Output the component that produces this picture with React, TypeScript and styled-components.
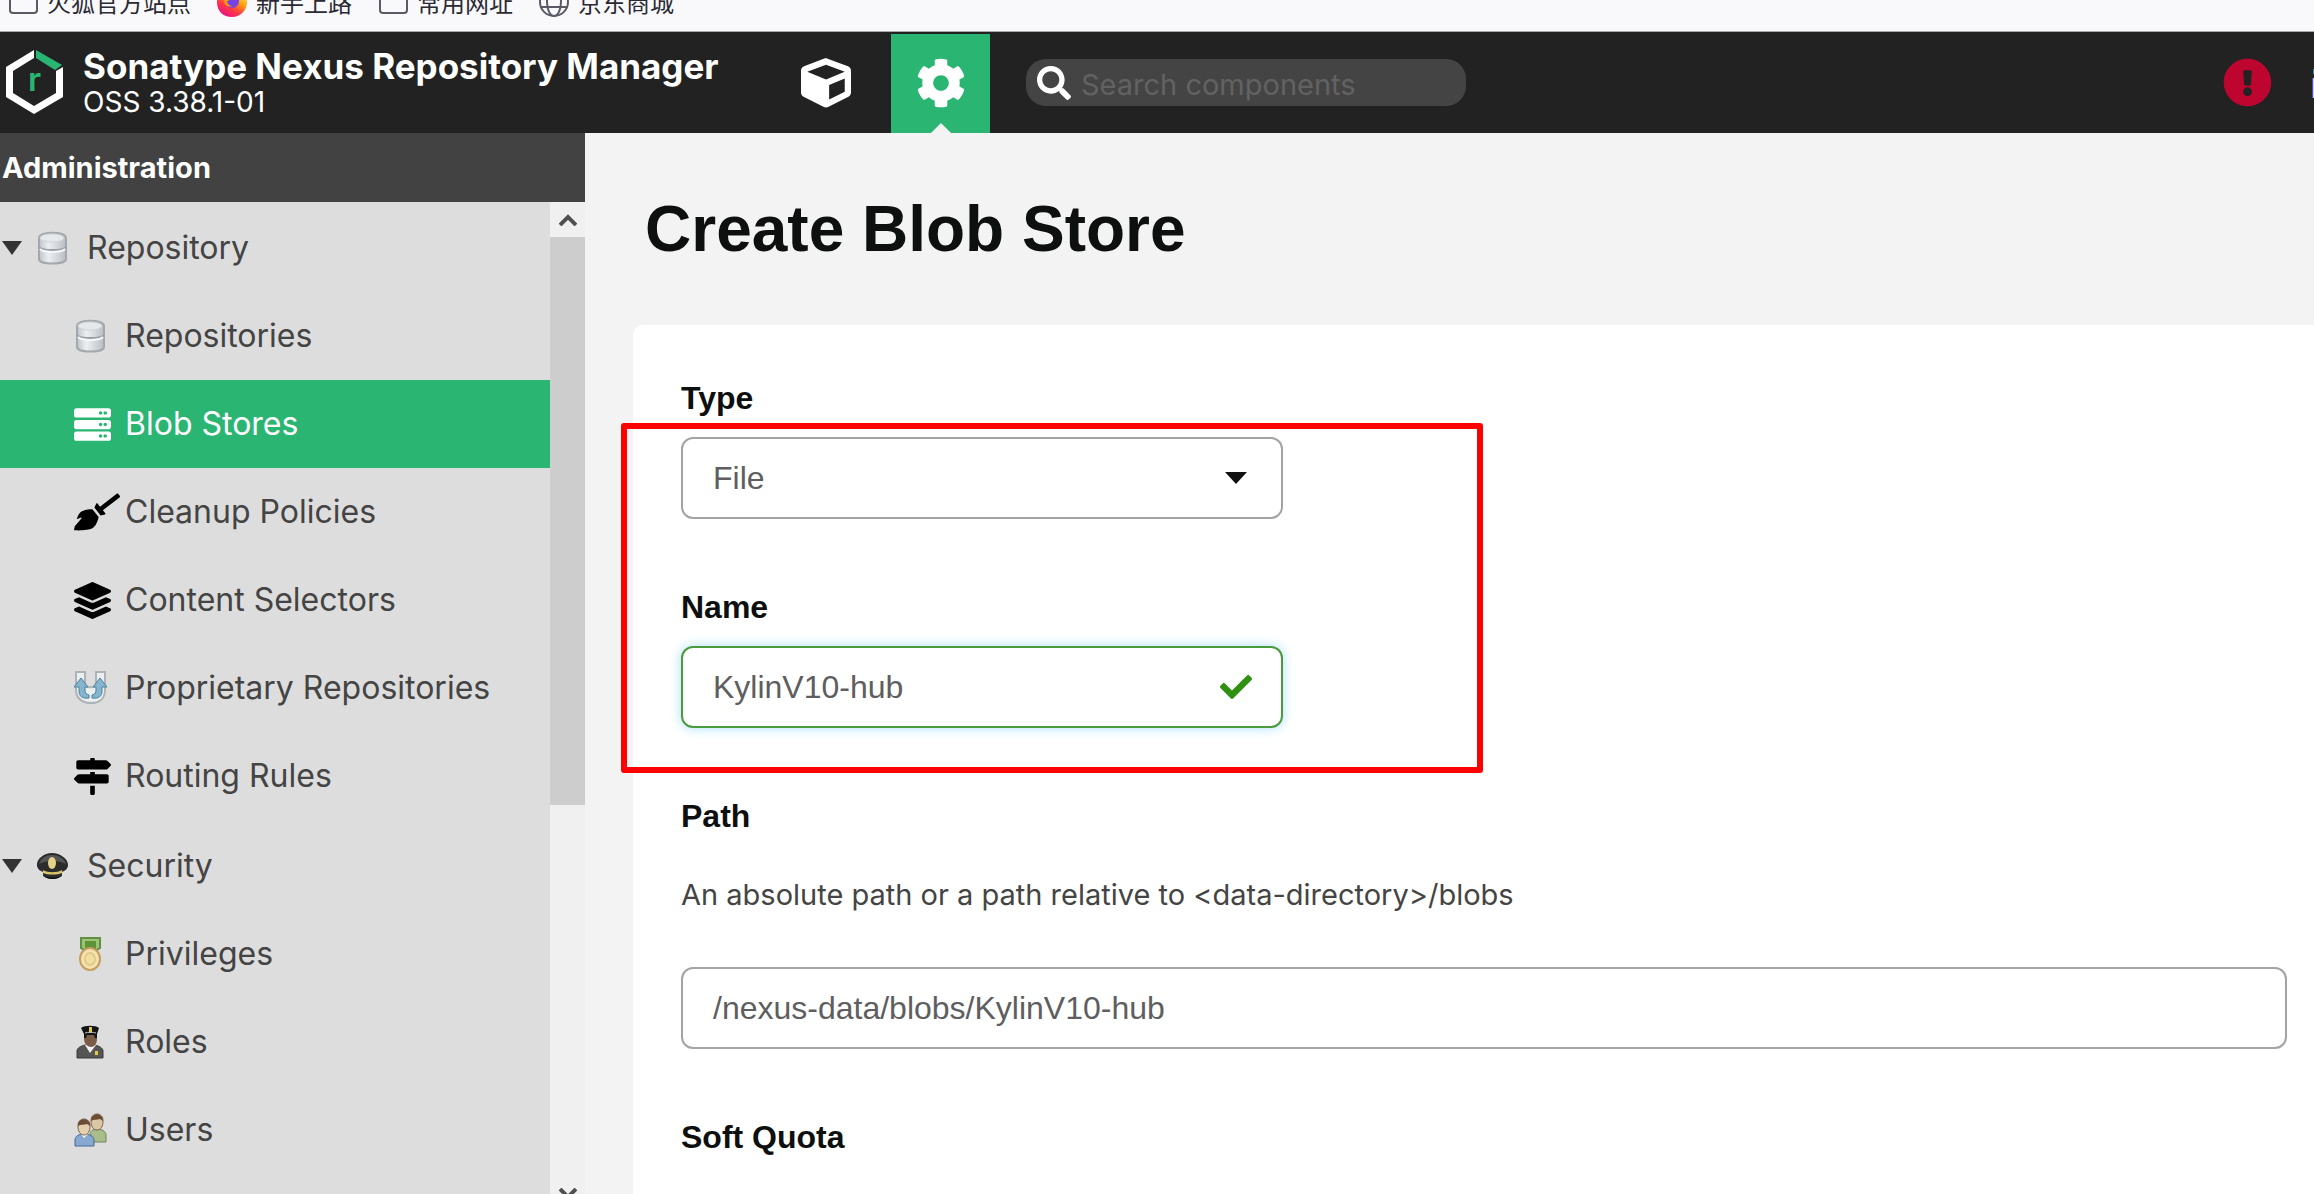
import React from 'react';
import styled, { createGlobalStyle, css } from 'styled-components';
import {
  FaBroom,
  FaCheck,
  FaCog,
  FaCube,
  FaExclamationCircle,
  FaLayerGroup,
  FaMapSigns,
  FaSearch,
  FaServer,
} from 'react-icons/fa';

const sans = '"Liberation Sans", Arial, sans-serif';
const brand = 'Inter, "Liberation Sans", sans-serif';
const green = '#2ab573';

const GlobalStyle = createGlobalStyle`
  *, *::before, *::after { box-sizing: border-box; }
  body { margin: 0; font-family: ${brand}; background: #f3f3f3; }
  button, input, select { font: inherit; margin: 0; }
  svg { display: block; flex: none; }
`;

/* ---------- shell ---------- */

const Page = styled.div`
  display: flex;
  flex-direction: column;
  height: 100vh;
  overflow: hidden;
`;

const Bookmarks = styled.nav`
  display: flex;
  align-items: flex-end;
  gap: 25px;
  flex: none;
  height: 32px;
  padding: 0 7px 13px;
  overflow: hidden;
  background: #f9f9fb;
  border-bottom: 1px solid #a9a9a9;
`;

const Bookmark = styled.a`
  display: flex;
  align-items: center;
  gap: 8px;
  flex: none;
  height: 32px;
  color: #2b2a33;
  font: 24px/32px "Noto Sans CJK SC", sans-serif;
  text-decoration: none;
  white-space: nowrap;
`;

const Header = styled.header`
  display: flex;
  align-items: stretch;
  flex: none;
  height: 101px;
  padding-top: 2px;
  background: #222;
  color: #fff;
`;

const Brand = styled.div`
  display: flex;
  align-items: center;
  gap: 19px;
  flex: 0 0 776px;
  padding: 0 0 4px 6px;
`;

const Product = styled.h1`
  margin: 0;
  font-size: 35px;
  font-weight: 700;
  line-height: 40px;
  white-space: nowrap;
`;

const Version = styled.div`
  font-size: 28px;
  line-height: 32px;
`;

const ModeButton = styled.button<{ $active?: boolean }>`
  display: flex;
  align-items: center;
  justify-content: center;
  position: relative;
  width: 99px;
  padding: 0 0 2px;
  border: 0;
  background: ${(p) => (p.$active ? green : 'transparent')};
  color: #fff;
  ${(p) =>
    p.$active &&
    css`
      margin-left: 16px;
      &::after {
        content: '';
        position: absolute;
        bottom: 0;
        border: 10px solid transparent;
        border-top: 0;
        border-bottom-color: #f3f3f3;
      }
    `}
`;

const Search = styled.label`
  display: flex;
  align-items: center;
  align-self: center;
  gap: 10px;
  width: 440px;
  height: 47px;
  margin: 0 0 2px 36px;
  padding: 0 11px;
  border-radius: 20px;
  background: #444;
`;

const SearchInput = styled.input`
  flex: 1;
  min-width: 0;
  padding: 4px 0 0;
  border: 0;
  outline: 0;
  background: transparent;
  color: #fff;
  font-size: 29px;
  &::placeholder {
    color: #626262;
    opacity: 1;
  }
`;

const HeaderEnd = styled.div`
  display: flex;
  align-items: center;
  gap: 40px;
  margin-left: auto;
  padding-bottom: 2px;
  color: #be0530;
`;

const Body = styled.div`
  display: flex;
  flex: 1;
  min-height: 0;
`;

/* ---------- sidebar ---------- */

const Sidebar = styled.aside`
  display: flex;
  flex-direction: column;
  flex: 0 0 585px;
  background: #ddd;
`;

const SidebarTitle = styled.h2`
  flex: none;
  margin: 0;
  padding: 1px 2px 0;
  background: #424242;
  color: #fff;
  font-size: 29px;
  font-weight: 700;
  line-height: 68px;
`;

const SidebarBody = styled.div`
  display: flex;
  flex: 1;
  min-height: 0;
`;

const Tree = styled.nav`
  flex: 1;
  overflow: hidden;
`;

const Group = styled.div`
  padding-top: 2px;
`;

const rowStyle = css`
  display: flex;
  align-items: center;
  width: 100%;
  height: 88px;
  border: 0;
  color: #444;
  font-size: 32px;
  line-height: 40px;
  text-align: left;
  text-decoration: none;
  white-space: nowrap;
`;

const GroupRow = styled.button`
  ${rowStyle}
  padding: 0 0 0 2px;
  background: transparent;
`;

const ItemRow = styled.a<{ $selected?: boolean }>`
  ${rowStyle}
  padding-left: 74px;
  background: ${(p) => (p.$selected ? green : 'transparent')};
  color: ${(p) => (p.$selected ? '#fff' : '#444')};
`;

const Arrow = styled.span`
  width: 20px;
  margin-right: 14px;
  border: 10px solid transparent;
  border-top: 14px solid #333;
  border-bottom: 0;
`;

const IconCell = styled.span<{ $selected?: boolean }>`
  display: flex;
  flex: 0 0 51px;
  color: ${(p) => (p.$selected ? '#fff' : '#000')};
`;

const Scrollbar = styled.div`
  display: flex;
  flex-direction: column;
  justify-content: space-between;
  flex: 0 0 35px;
  background: #f0f0f0;
`;

const Thumb = styled.div`
  height: 568px;
  margin-bottom: auto;
  background: #cdcdcd;
`;

const ScrollButton = styled.button<{ $end?: boolean }>`
  display: flex;
  align-items: ${(p) => (p.$end ? 'flex-start' : 'center')};
  justify-content: center;
  height: ${(p) => (p.$end ? 26 : 35)}px;
  padding: ${(p) => (p.$end ? 20 : 0)}px 0 0;
  border: 0;
  overflow: hidden;
  background: #f0f0f0;
`;

/* ---------- content ---------- */

const Main = styled.main`
  flex: 1;
  min-width: 0;
  padding: 60px 0 0 48px;
  overflow: hidden;
  display: flex;
  flex-direction: column;
  gap: 60px;
`;

const PageTitle = styled.h2`
  margin: 0;
  padding-left: 12px;
  color: #0e1010;
  font: 700 64px/72px ${sans};
`;

const Card = styled.form`
  display: flex;
  flex-direction: column;
  gap: 68px;
  flex: 1;
  padding: 53px 27px 0 48px;
  border-top-left-radius: 10px;
  background: #fff;
`;

const Highlighted = styled.div`
  display: flex;
  flex-direction: column;
  gap: 68px;
  position: relative;
  &::after {
    content: '';
    position: absolute;
    top: 45px;
    bottom: -45px;
    left: -60px;
    width: 862px;
    border: 6px solid #f00;
    border-radius: 3px;
    pointer-events: none;
  }
`;

const Field = styled.div`
  display: flex;
  flex-direction: column;
  gap: 19px;
`;

const labelStyle = css`
  color: #0e1010;
  font: 700 32px/40px ${sans};
`;

const Label = styled.label`
  ${labelStyle}
`;

const SectionLabel = styled.h3`
  ${labelStyle}
  margin: 0;
`;

const Hint = styled.p`
  margin: 0;
  padding: 20px 0 33px;
  color: #444;
  font-size: 29px;
  line-height: 40px;
`;

const ControlBox = styled.div<{ $short?: boolean; $valid?: boolean }>`
  display: grid;
  grid-template-columns: 1fr auto;
  align-items: center;
  height: 82px;
  width: 100%;
  max-width: ${(p) => (p.$short ? '602px' : 'none')};
  border: 2px solid ${(p) => (p.$valid ? '#4a9b3c' : '#a3a3a3')};
  border-radius: 12px;
  background: #fff;
  box-shadow: ${(p) => (p.$valid ? '0 0 12px #a9dff8' : 'none')};
`;

const controlStyle = css`
  grid-area: 1 / 1 / 2 / 3;
  width: 100%;
  height: 100%;
  padding: 0 80px 0 30px;
  border: 0;
  outline: 0;
  border-radius: 12px;
  background: transparent;
  color: #5e5e60;
  font: 32px/40px ${sans};
`;

const TextInput = styled.input`
  ${controlStyle}
`;

const Select = styled.select`
  ${controlStyle}
  appearance: none;
`;

const Adornment = styled.span`
  grid-area: 1 / 2 / 2 / 3;
  display: flex;
  justify-content: center;
  width: 91px;
  color: #2f910f;
  pointer-events: none;
`;

const Caret = styled.span`
  border: 11px solid transparent;
  border-top: 12px solid #111;
  border-bottom: 0;
`;

/* ---------- drawings ---------- */

const FolderIcon = () => (
  <svg width="32" height="32" viewBox="0 0 32 32" fill="none" stroke="#5b5b66" strokeWidth="2">
    <path d="M3 7a3 3 0 0 1 3-3h7l4 4h10a3 3 0 0 1 3 3v13a3 3 0 0 1-3 3H6a3 3 0 0 1-3-3z" />
  </svg>
);

const GlobeIcon = () => (
  <svg width="32" height="32" viewBox="0 0 32 32" fill="none" stroke="#5b5b66" strokeWidth="2">
    <circle cx="16" cy="16" r="14" />
    <ellipse cx="16" cy="16" rx="7" ry="14" />
    <path d="M2 12h28M2 21h28" />
  </svg>
);

const FirefoxIcon = () => (
  <svg width="32" height="32" viewBox="0 0 32 32">
    <defs>
      <linearGradient id="fox" x1="0.85" y1="0.1" x2="0.3" y2="1">
        <stop offset="0" stopColor="#fff44f" />
        <stop offset="0.4" stopColor="#ff980e" />
        <stop offset="0.7" stopColor="#ff3647" />
        <stop offset="1" stopColor="#e31587" />
      </linearGradient>
    </defs>
    <path d="M16 2c9 0 15 6 15 14s-6 15-15 15S1 25 1 16C1 11 3 8 5 6l2 3c2-2 5-2 7-5z" fill="url(#fox)" />
    <circle cx="16" cy="15" r="7" fill="#7542e5" />
    <path d="M8 11c4-2 7 0 9 2-3 0-4 2-6 2 0 3 3 5 6 5-5 2-10-1-9-9z" fill="#ff980e" />
  </svg>
);

const NexusLogo = () => (
  <svg width="58" height="64" viewBox="0 0 58 64">
    <path d="M28 0 0 17v30l28 17 29-17V17l-7 4v22L28 56 7 43V21L28 8z" fill="#fff" />
    <path d="M30 0l26 15-7 5L30 8z" fill={green} />
    <text x="22" y="41" fontFamily="Inter, sans-serif" fontWeight="600" fontSize="33" fill={green}>
      r
    </text>
  </svg>
);

const UserEdge = () => (
  <svg width="2" height="34" viewBox="0 0 2 34">
    <path d="M1 3h1v5H1z" fill="#3f8fb0" />
    <path d="M0 12h1v20H0z" fill="#4c4cc4" />
    <path d="M1 12h1v20H1z" fill="#c9cdf8" />
  </svg>
);

const Chevron = ({ down }: { down?: boolean }) => (
  <svg width="18" height="13" viewBox="0 0 18 13" fill="none" stroke="#505050" strokeWidth="4">
    <path d={down ? 'M1 1l8 8 8-8' : 'M1 12l8-8 8 8'} />
  </svg>
);

const DatabaseIcon = () => (
  <svg width="33" height="34" viewBox="0 0 33 34">
    <defs>
      <linearGradient id="drum">
        <stop offset="0" stopColor="#bfc4c8" />
        <stop offset="0.35" stopColor="#eceff2" />
        <stop offset="1" stopColor="#b9bec2" />
      </linearGradient>
    </defs>
    <path d="M3 7c0-7 27-7 27 0v21c0 6-27 6-27 0z" fill="url(#drum)" stroke="#a3a8ac" strokeWidth="2" />
    <ellipse cx="16" cy="7" rx="12" ry="4" fill="#e6e9ec" stroke="#cfd3d6" />
    <path d="M3 16c3 4 24 4 27 0" fill="none" stroke="#989ea3" strokeWidth="2" />
    <path d="M4 18c4 4 21 4 25 0" fill="none" stroke="#f5f7f8" strokeWidth="2" />
  </svg>
);

const ProprietaryIcon = () => (
  <svg width="33" height="34" viewBox="0 0 33 34">
    <path
      d="M2 1h9v13c0 3 11 3 11 0V1h9v18c0 9-6 13-14 13S2 28 2 19z"
      fill="#eceff1"
      stroke="#adb3b7"
      strokeWidth="2"
    />
    <path d="M7 7l7 9h-3v3c0 3 1 4 4 5v3C8 28 5 25 5 20v-4H0z" fill="#85b4cf" stroke="#4f8299" />
    <path d="M26 7l-7 9h3v3c0 3-1 4-4 5v3c7 1 10-2 10-7v-4h5z" fill="#85b4cf" stroke="#4f8299" />
  </svg>
);

const CapIcon = () => (
  <svg width="33" height="28" viewBox="0 0 33 28">
    <path d="M1 14C0 7 8 1 16 1s17 6 16 13c-1 4-4 5-6 6v4c-5 4-14 4-19 0v-4c-2-1-5-2-6-6z" fill="#2c2c2c" />
    <path d="M3 12C5 6 10 3 16 3s12 3 14 9c-7-4-20-4-27 0z" fill="#555" />
    <path d="M7 18c5 3 14 3 19 0v3c-5 2-14 2-19 0z" fill="#d9c36b" />
    <path d="M8 24c5 2 12 2 17 0-4 4-13 4-17 0z" fill="#0c0c0c" />
    <ellipse cx="16" cy="11" rx="4" ry="6" fill="#e6d488" />
  </svg>
);

const MedalIcon = () => (
  <svg width="33" height="34" viewBox="0 0 33 34">
    <path d="M7 1h19v10l-5 3h-9l-5-3z" fill="#9cc476" stroke="#5f8f3f" strokeWidth="2" />
    <path d="M11 4h11v8H11z" fill="#5f9338" />
    <ellipse cx="16" cy="22" rx="10" ry="11" fill="#f4e3b0" stroke="#c79d60" strokeWidth="2" />
    <ellipse cx="16" cy="22" rx="5" ry="6" fill="#f1dfa2" stroke="#e2ca8a" strokeWidth="2" />
  </svg>
);

const RoleIcon = () => (
  <svg width="33" height="34" viewBox="0 0 33 34">
    <path d="M3 33v-7c0-3 4-5 8-6h10c4 1 8 3 8 6v7z" fill="#555" stroke="#3a3a3a" />
    <path d="M11 20l5 8 6-8-6-2z" fill="#f2f2f2" />
    <path d="M10 8h13v6c0 5-3 8-6 8s-7-3-7-8z" fill="#7a5b45" />
    <path d="M7 3c3-3 15-3 18 0l-2 6v4h-2l-1-3h-7l-1 3h-2V9z" fill="#141414" />
    <path d="M15 2h3v6h-3zM21 26h3v4h-3z" fill="#e2c94a" />
    <path d="M11 8c3-1 8-1 11 0" stroke="#b9b9b9" fill="none" />
  </svg>
);

const UsersIcon = () => (
  <svg width="33" height="34" viewBox="0 0 33 34">
    <path d="M16 29v-7c0-4 3-6 7-6s9 2 9 6v7z" fill="#a9bd8b" stroke="#71855a" />
    <path d="M17 8c0-4 2-7 6-7s6 3 6 7c0 5-2 9-6 9s-6-4-6-9z" fill="#dcc6a6" stroke="#7c6146" />
    <path d="M17 8c0-9 12-9 12 0l-3-2c-3 1-6 0-9 2z" fill="#6c4d36" />
    <path d="M1 33v-6c0-4 4-6 9-6s10 2 10 6v6z" fill="#87a9d1" stroke="#47698f" />
    <path d="M7 21l3 4 4-4z" fill="#fff" />
    <path d="M4 13c0-4 2-7 6-7s6 3 6 7c0 5-2 9-6 9s-6-4-6-9z" fill="#e4cfae" stroke="#7c6146" />
    <path d="M4 13c-1-9 13-9 12 0l-3-2c-3 1-6 0-9 2z" fill="#6c4d36" />
  </svg>
);

/* ---------- data ---------- */

interface Item {
  name: string;
  icon: React.ReactNode;
  selected?: boolean;
}

const bookmarks: Item[] = [
  { name: '火狐官方站点', icon: <FolderIcon /> },
  { name: '新手上路', icon: <FirefoxIcon /> },
  { name: '常用网址', icon: <FolderIcon /> },
  { name: '京东商城', icon: <GlobeIcon /> },
];

const groups: (Item & { items: Item[] })[] = [
  {
    name: 'Repository',
    icon: <DatabaseIcon />,
    items: [
      { name: 'Repositories', icon: <DatabaseIcon /> },
      { name: 'Blob Stores', icon: <FaServer size={37} />, selected: true },
      { name: 'Cleanup Policies', icon: <FaBroom size={46} /> },
      { name: 'Content Selectors', icon: <FaLayerGroup size={37} /> },
      { name: 'Proprietary Repositories', icon: <ProprietaryIcon /> },
      { name: 'Routing Rules', icon: <FaMapSigns size={37} /> },
    ],
  },
  {
    name: 'Security',
    icon: <CapIcon />,
    items: [
      { name: 'Privileges', icon: <MedalIcon /> },
      { name: 'Roles', icon: <RoleIcon /> },
      { name: 'Users', icon: <UsersIcon /> },
    ],
  },
];

export default function App() {
  return (
    <Page>
      <GlobalStyle />
      <Bookmarks aria-label="Bookmarks">
        {bookmarks.map((b) => (
          <Bookmark key={b.name} href="#">
            {b.icon}
            {b.name}
          </Bookmark>
        ))}
      </Bookmarks>

      <Header>
        <Brand>
          <NexusLogo />
          <div>
            <Product>Sonatype Nexus Repository Manager</Product>
            <Version>OSS 3.38.1-01</Version>
          </div>
        </Brand>
        <ModeButton type="button" aria-label="Browse">
          <FaCube size={50} />
        </ModeButton>
        <ModeButton type="button" aria-label="Administration" $active>
          <FaCog size={50} />
        </ModeButton>
        <Search>
          <FaSearch size={34} aria-hidden />
          <SearchInput type="text" placeholder="Search components" aria-label="Search components" />
        </Search>
        <HeaderEnd>
          <FaExclamationCircle size={49} />
          <UserEdge />
        </HeaderEnd>
      </Header>

      <Body>
        <Sidebar>
          <SidebarTitle>Administration</SidebarTitle>
          <SidebarBody>
            <Tree aria-label="Administration">
              {groups.map((g) => (
                <Group key={g.name}>
                  <GroupRow type="button" aria-expanded>
                    <Arrow />
                    <IconCell>{g.icon}</IconCell>
                    {g.name}
                  </GroupRow>
                  {g.items.map((item) => (
                    <ItemRow key={item.name} href="#" $selected={item.selected}>
                      <IconCell $selected={item.selected}>{item.icon}</IconCell>
                      {item.name}
                    </ItemRow>
                  ))}
                </Group>
              ))}
            </Tree>
            <Scrollbar>
              <ScrollButton type="button" aria-label="Scroll up">
                <Chevron />
              </ScrollButton>
              <Thumb />
              <ScrollButton type="button" aria-label="Scroll down" $end>
                <Chevron down />
              </ScrollButton>
            </Scrollbar>
          </SidebarBody>
        </Sidebar>

        <Main>
          <PageTitle>Create Blob Store</PageTitle>
          <Card>
            <Highlighted>
              <Field>
                <Label htmlFor="type">Type</Label>
                <ControlBox $short>
                  <Select id="type" defaultValue="File">
                    <option>File</option>
                  </Select>
                  <Adornment>
                    <Caret />
                  </Adornment>
                </ControlBox>
              </Field>
              <Field>
                <Label htmlFor="name">Name</Label>
                <ControlBox $short $valid>
                  <TextInput id="name" type="text" defaultValue="KylinV10-hub" />
                  <Adornment>
                    <FaCheck size={32} />
                  </Adornment>
                </ControlBox>
              </Field>
            </Highlighted>
            <Field>
              <Label htmlFor="path">Path</Label>
              <Hint id="path-hint">An absolute path or a path relative to &lt;data-directory&gt;/blobs</Hint>
              <ControlBox>
                <TextInput
                  id="path"
                  type="text"
                  aria-describedby="path-hint"
                  defaultValue="/nexus-data/blobs/KylinV10-hub"
                />
              </ControlBox>
            </Field>
            <SectionLabel>Soft Quota</SectionLabel>
          </Card>
        </Main>
      </Body>
    </Page>
  );
}
